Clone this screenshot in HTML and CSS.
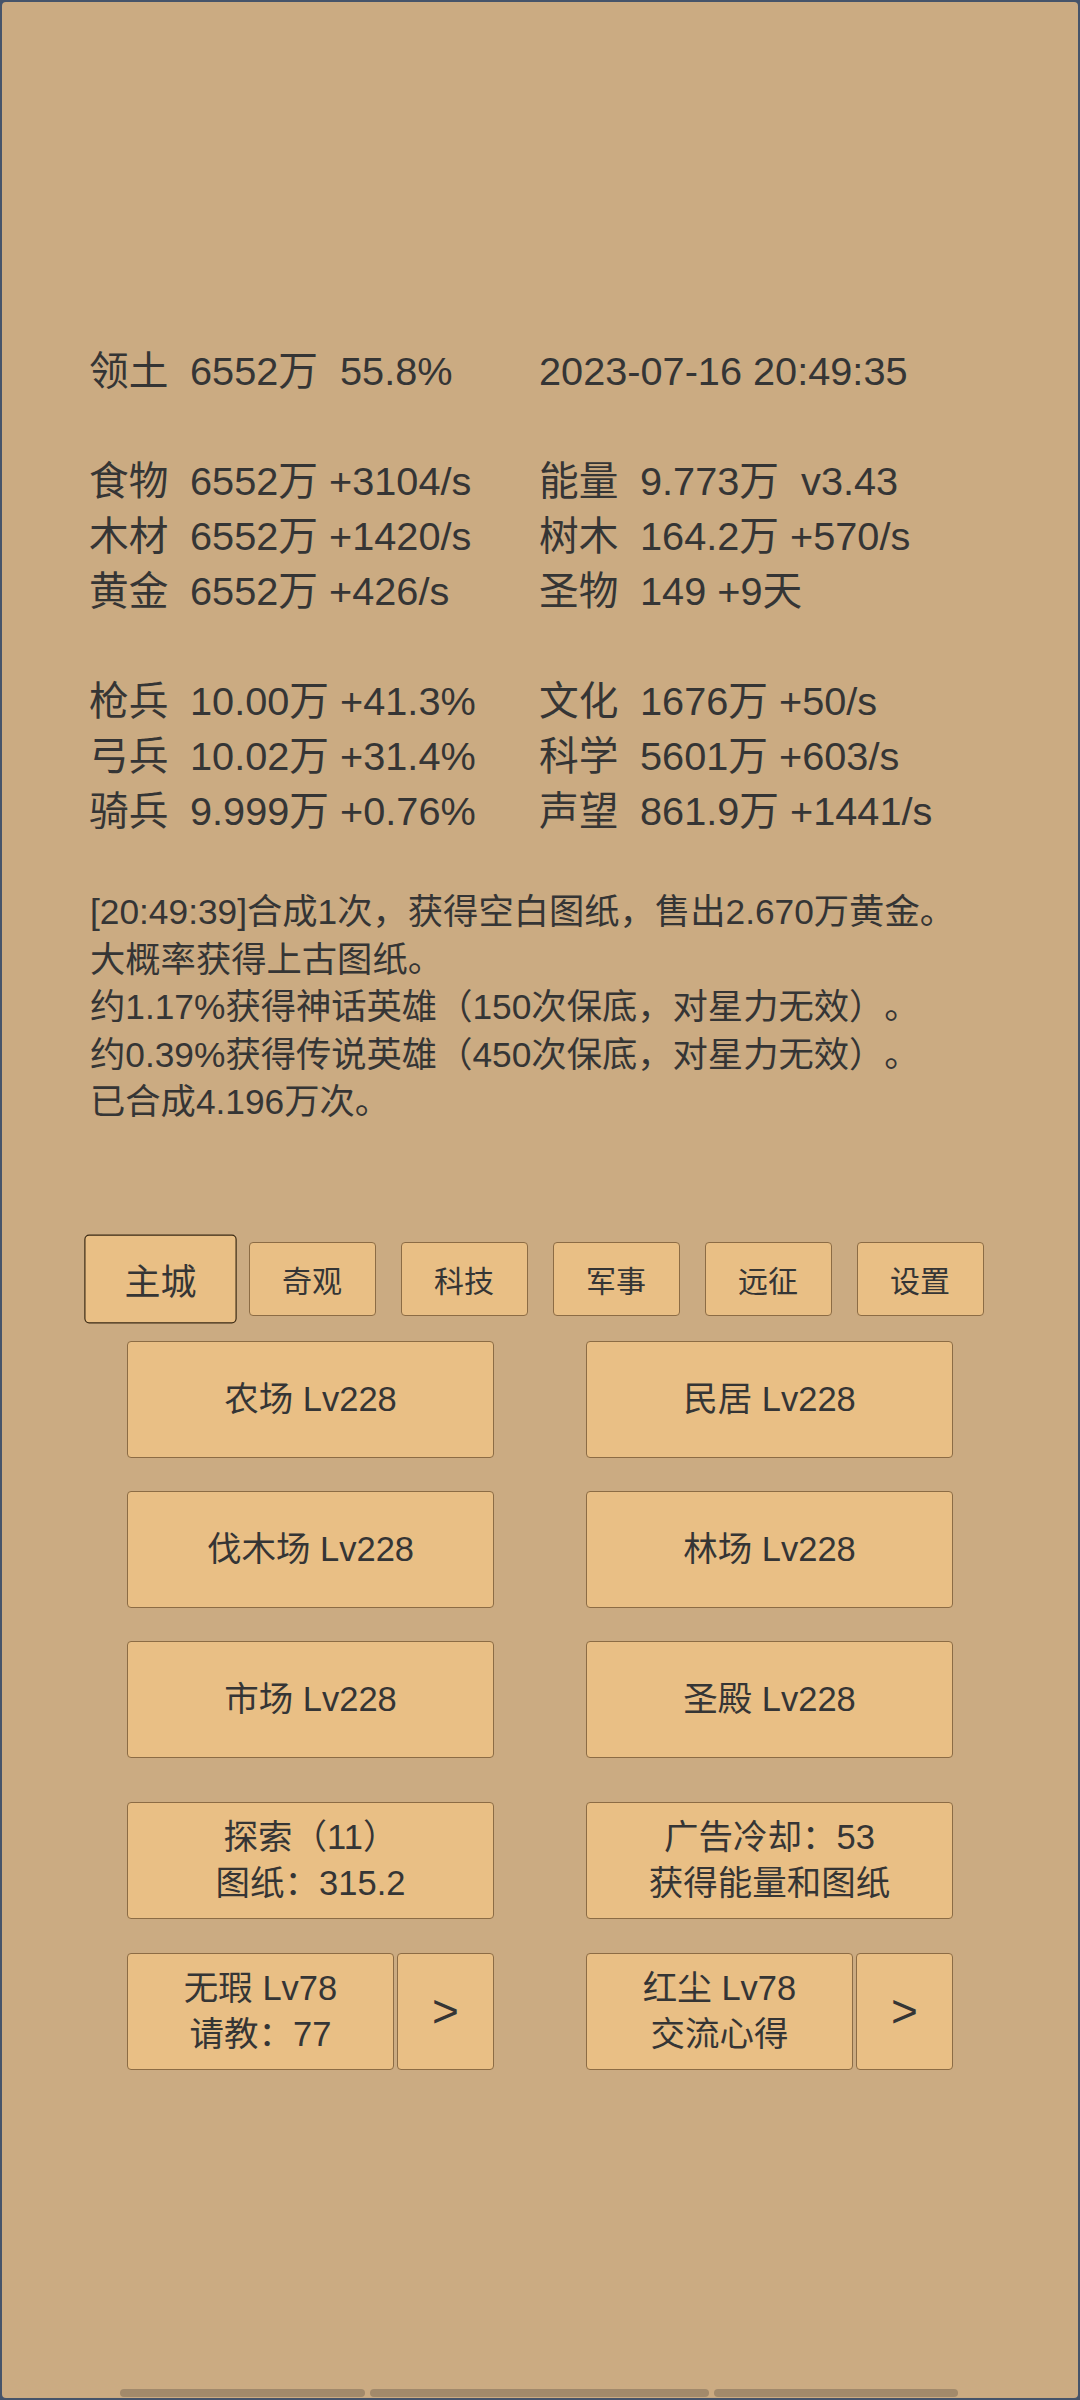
FILE: index.html
```html
<!DOCTYPE html>
<html lang="zh">
<head>
    <meta charset="UTF-8">
    <meta name="viewport" content="width=device-width, initial-scale=1.0">
    <title>主城</title>
    <link rel="stylesheet" href="styles.css">
</head>
<body>
    <div class="screen">
        <div class="stats">
            <div class="cell"><span class="label">领土</span><span class="val">6552万  55.8%</span></div>
            <div class="cell"><span class="val">2023-07-16 20:49:35</span></div>
            <div class="cell blank"></div>
            <div class="cell blank"></div>
            <div class="cell"><span class="label">食物</span><span class="val">6552万 +3104/s</span></div>
            <div class="cell"><span class="label">能量</span><span class="val">9.773万  v3.43</span></div>
            <div class="cell"><span class="label">木材</span><span class="val">6552万 +1420/s</span></div>
            <div class="cell"><span class="label">树木</span><span class="val">164.2万 +570/s</span></div>
            <div class="cell"><span class="label">黄金</span><span class="val">6552万 +426/s</span></div>
            <div class="cell"><span class="label">圣物</span><span class="val">149 +9天</span></div>
            <div class="cell blank"></div>
            <div class="cell blank"></div>
            <div class="cell"><span class="label">枪兵</span><span class="val">10.00万 +41.3%</span></div>
            <div class="cell"><span class="label">文化</span><span class="val">1676万 +50/s</span></div>
            <div class="cell"><span class="label">弓兵</span><span class="val">10.02万 +31.4%</span></div>
            <div class="cell"><span class="label">科学</span><span class="val">5601万 +603/s</span></div>
            <div class="cell"><span class="label">骑兵</span><span class="val">9.999万 +0.76%</span></div>
            <div class="cell"><span class="label">声望</span><span class="val">861.9万 +1441/s</span></div>
        </div>

        <div class="log">
            <p>[20:49:39]合成1次，获得空白图纸，售出2.670万黄金。</p>
            <p>大概率获得上古图纸。</p>
            <p>约1.17%获得神话英雄（150次保底，对星力无效）。</p>
            <p>约0.39%获得传说英雄（450次保底，对星力无效）。</p>
            <p>已合成4.196万次。</p>
        </div>

        <div class="tabs">
            <button class="tab active">主城</button>
            <button class="tab">奇观</button>
            <button class="tab">科技</button>
            <button class="tab">军事</button>
            <button class="tab">远征</button>
            <button class="tab">设置</button>
        </div>

        <div class="grid">
            <button class="btn">农场 Lv228</button>
            <button class="btn">民居 Lv228</button>
            <button class="btn">伐木场 Lv228</button>
            <button class="btn">林场 Lv228</button>
            <button class="btn">市场 Lv228</button>
            <button class="btn">圣殿 Lv228</button>
        </div>

        <div class="grid actions">
            <button class="btn two">探索（11）<br>图纸：315.2</button>
            <button class="btn two">广告冷却：53<br>获得能量和图纸</button>
            <div class="hero">
                <button class="btn two">无瑕 Lv78<br>请教：77</button>
                <button class="btn arrow">&gt;</button>
            </div>
            <div class="hero">
                <button class="btn two">红尘 Lv78<br>交流心得</button>
                <button class="btn arrow">&gt;</button>
            </div>
        </div>

        <div class="scrollbar">
            <span class="seg s1"></span>
            <span class="seg s2"></span>
            <span class="seg s3"></span>
        </div>
    </div>
</body>
</html>
```

FILE: styles.css
```css
* {
    box-sizing: border-box;
    font-family: "Liberation Sans", "Noto Sans CJK SC", sans-serif;
    text-spacing-trim: space-all;
}

html, body {
    margin: 0;
    background-color: #46546a;
}

.screen {
    width: 1080px;
    height: 2400px;
    border: 2px solid #46546a;
    border-radius: 6px;
    background-color: #cbab82;
    color: #353535;
    display: flex;
    flex-direction: column;
}

.stats {
    display: grid;
    grid-template-columns: 450px 450px;
    padding-top: 342px;
    padding-left: 87px;
    font-size: 39.7px;
    line-height: 55px;
}

.cell {
    height: 55px;
    display: flex;
    white-space: pre;
}

.label {
    width: 101px;
}

.log {
    margin-top: 49px;
    padding-left: 88px;
    font-size: 35.3px;
    line-height: 47.5px;
}

.log p {
    margin: 0;
    white-space: nowrap;
}

.tabs {
    margin-top: 116px;
    display: flex;
    justify-content: center;
    gap: 25px;
}

button {
    font-size: 34.5px;
    color: #353535;
    background-color: #e9bf85;
    border: 1px solid #8c6c45;
    border-radius: 4px;
    padding: 0;
    margin: 0;
}

.tab {
    width: 127px;
    height: 74px;
    font-size: 30px;
}

.tab.active {
    transform: scale(1.2);
    border-color: #3b2a14;
}

.grid {
    margin-top: 25px;
    display: grid;
    grid-template-columns: 367px 367px;
    justify-content: center;
    column-gap: 92px;
    row-gap: 33px;
}

.btn {
    height: 117px;
    line-height: 46px;
}

.actions {
    margin-top: 44px;
    row-gap: 34px;
}

.hero {
    display: flex;
    gap: 3px;
}

.hero .two {
    flex: 1;
}

.arrow {
    width: 97px;
    font-size: 46px;
}

.scrollbar {
    margin-top: auto;
    margin-bottom: 1px;
    padding-left: 118px;
    display: flex;
    gap: 5px;
}

.seg {
    height: 8px;
    border-radius: 4px;
    background-color: #a28a6b;
}

.s1 { width: 245px; }
.s2 { width: 339px; }
.s3 { width: 244px; }
```
